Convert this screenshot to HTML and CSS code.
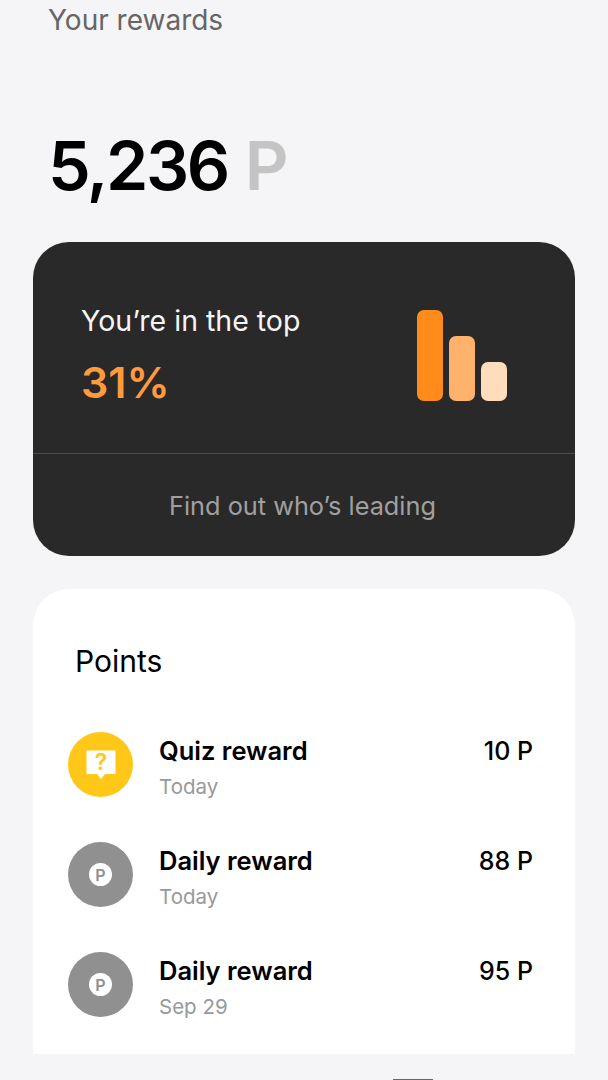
FILE: index.html
```html
<!DOCTYPE html>
<html lang="en">
<head>
    <meta charset="UTF-8">
    <meta name="viewport" content="width=device-width, initial-scale=1.0">
    <title>Your rewards</title>
    <link rel="stylesheet" href="styles.css">
</head>
<body>
    <h1 class="page-title">Your rewards</h1>
    <div class="total">5,236 <span class="total-unit">P</span></div>

    <section class="rank-card">
        <div class="rank-main">
            <div>
                <div class="rank-label">You’re in the top</div>
                <div class="rank-value">31%</div>
            </div>
            <div class="bars">
                <div class="bar bar-high"></div>
                <div class="bar bar-mid"></div>
                <div class="bar bar-low"></div>
            </div>
        </div>
        <div class="rank-link">Find out who’s leading</div>
    </section>

    <section class="points-card">
        <h2 class="points-title">Points</h2>

        <div class="point-row">
            <div class="point-icon quiz">
                <svg width="36" height="36" viewBox="0 0 36 36">
                    <path d="M3.5 3.5h29v23.5H22l-4 5-4-5H3.5z" fill="#fff"/>
                    <text x="18" y="23" text-anchor="middle" class="quiz-mark">?</text>
                </svg>
            </div>
            <div class="point-info">
                <div class="point-name">Quiz reward</div>
                <div class="point-date">Today</div>
            </div>
            <div class="point-amount">10 P</div>
        </div>

        <div class="point-row">
            <div class="point-icon daily"><span class="coin">P</span></div>
            <div class="point-info">
                <div class="point-name">Daily reward</div>
                <div class="point-date">Today</div>
            </div>
            <div class="point-amount">88 P</div>
        </div>

        <div class="point-row">
            <div class="point-icon daily"><span class="coin">P</span></div>
            <div class="point-info">
                <div class="point-name">Daily reward</div>
                <div class="point-date">Sep 29</div>
            </div>
            <div class="point-amount">95 P</div>
        </div>
    </section>

    <div class="home-bar"></div>
</body>
</html>
```

FILE: styles.css
```css
* {
    box-sizing: border-box;
    font-family: Inter, "Noto Sans", sans-serif;
}

html, body {
    margin: 0;
    height: 1080px;
    overflow: hidden;
}

body {
    background-color: #f5f5f7;
    padding: 0 33px;
}

.page-title {
    margin: 0 0 0 15px;
    height: 41px;
    font-size: 28px;
    line-height: 41px;
    font-weight: 400;
    color: #666;
}

.total {
    margin: 83px 0 0 15px;
    height: 82px;
    font-size: 68px;
    line-height: 82px;
    font-weight: 600;
    letter-spacing: -2.4px;
    word-spacing: 2px;
    color: #000;
}

.total-unit {
    color: #c4c4c4;
}

.rank-card {
    margin-top: 36px;
    height: 314px;
    background-color: #2a292a;
    border-radius: 36px;
}

.rank-main {
    height: 212px;
    padding: 12px 68px 0 48px;
    display: flex;
    justify-content: space-between;
    align-items: center;
    border-bottom: 1px solid #4a4a4a;
}

.rank-label {
    font-size: 28.5px;
    line-height: 40px;
    color: #f5f5f5;
}

.rank-value {
    margin-top: 16px;
    font-size: 43px;
    line-height: 50px;
    font-weight: 600;
    color: #ff9a3d;
}

.bars {
    display: flex;
    align-items: flex-end;
    gap: 6px;
    height: 91px;
    margin-top: 4px;
}

.bar {
    width: 26px;
    border-radius: 7px;
}

.bar-high {
    height: 91px;
    background-color: #ff8c1a;
}

.bar-mid {
    height: 65px;
    background-color: #ffb26b;
}

.bar-low {
    height: 39px;
    background-color: #ffdcbc;
}

.rank-link {
    height: 102px;
    padding-right: 3px;
    display: flex;
    align-items: center;
    justify-content: center;
    font-size: 25.3px;
    color: #a0a0a0;
}

.points-card {
    margin-top: 33px;
    height: 465px;
    padding: 54px 42px 0 35px;
    background-color: #fff;
    border-radius: 36px 36px 0 0;
}

.points-title {
    margin: 0 0 0 7px;
    height: 36px;
    font-size: 30px;
    line-height: 36px;
    font-weight: 400;
    color: #000;
}

.points-title + .point-row {
    margin-top: 53px;
}

.point-row {
    display: flex;
    height: 110px;
}

.point-icon {
    width: 65px;
    height: 65px;
    border-radius: 50%;
    display: flex;
    align-items: center;
    justify-content: center;
    flex-shrink: 0;
}

.quiz {
    background-color: #ffc818;
}

.quiz-mark {
    font-size: 23px;
    font-weight: 600;
    fill: #ffc818;
}

.daily {
    background-color: #909090;
}

.coin {
    width: 23px;
    height: 23px;
    border-radius: 50%;
    background-color: #fff;
    display: flex;
    align-items: center;
    justify-content: center;
    font-size: 16px;
    font-weight: 600;
    color: #909090;
}

.point-info {
    margin-left: 26px;
    flex: 1;
}

.point-name {
    margin-top: 3px;
    font-size: 25.5px;
    line-height: 32px;
    font-weight: 600;
    color: #000;
}

.point-date {
    margin-top: 5px;
    font-size: 20.5px;
    line-height: 30px;
    color: #999;
}

.point-amount {
    margin-top: 3px;
    font-size: 25px;
    line-height: 32px;
    font-weight: 500;
    color: #000;
}

.home-bar {
    position: absolute;
    left: 393px;
    top: 1079px;
    width: 40px;
    height: 1px;
    background-color: #666;
}
```
